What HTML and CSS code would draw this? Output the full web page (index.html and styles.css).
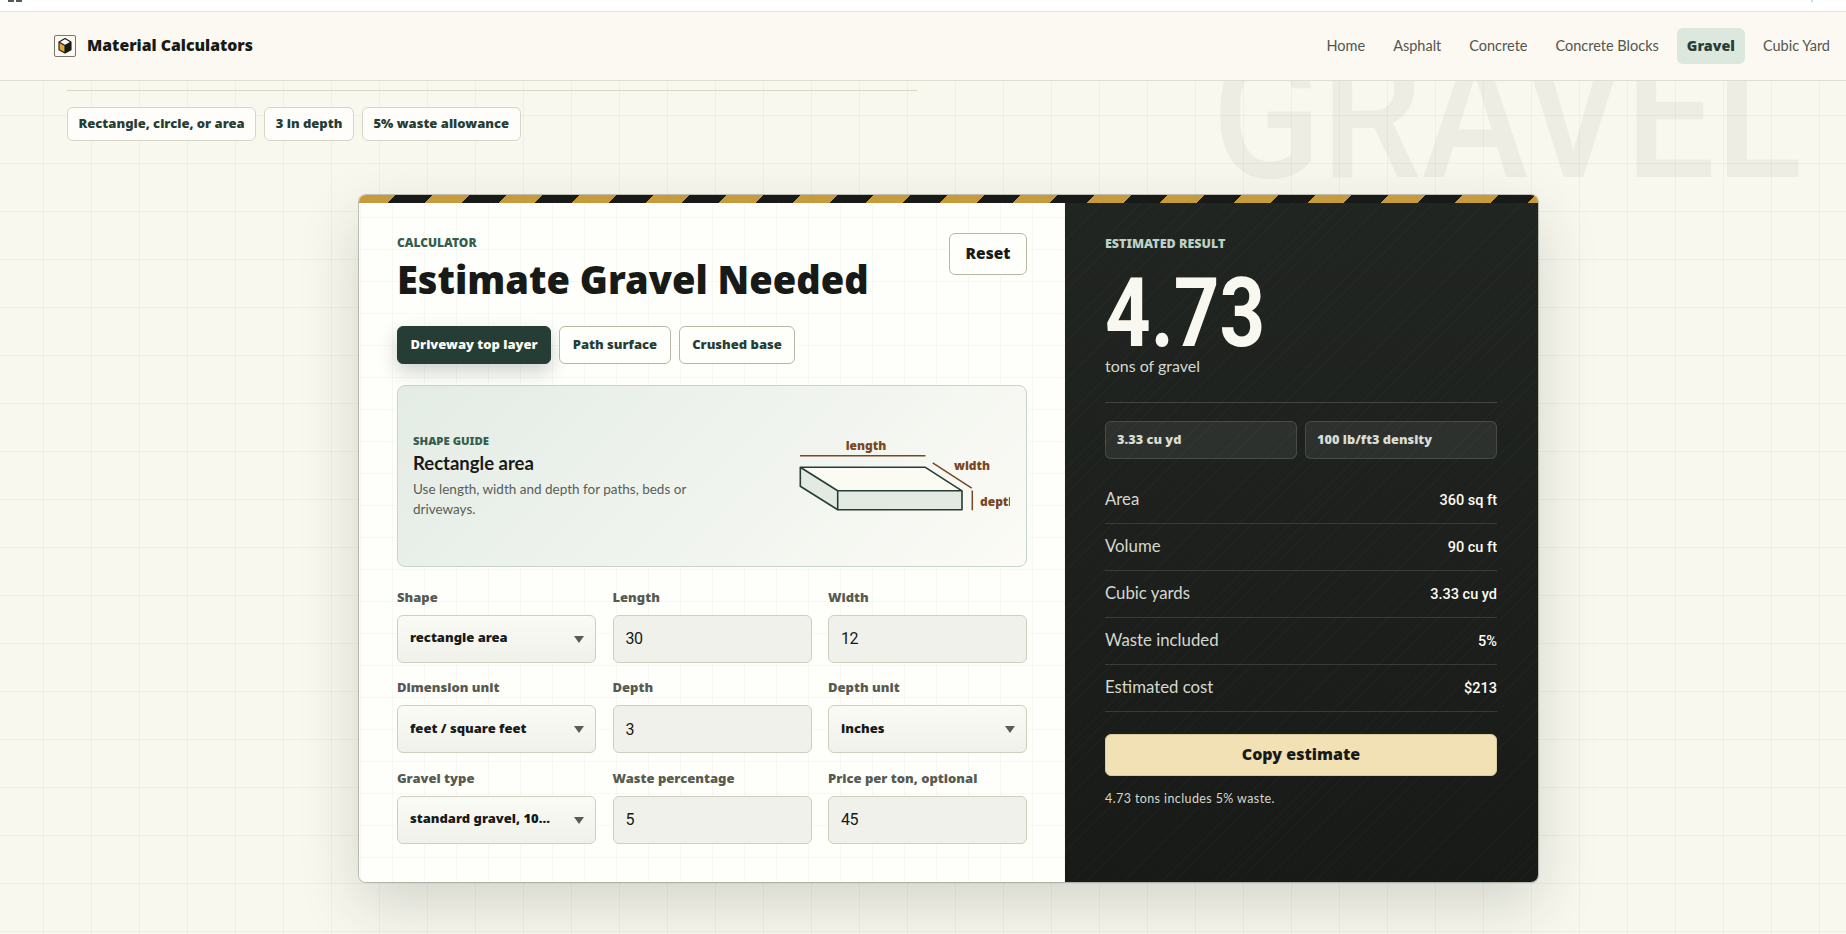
FILE: index.html
```html
<!DOCTYPE html>
<html lang="en">
<head>
<meta charset="utf-8">
<title>Gravel Calculator</title>
<link rel="stylesheet" href="styles.css">
</head>
<body>
<div class="chrome-strip"><span class="chrome-mark"></span><span class="chrome-dot"></span></div>
<header class="site-header">
  <a class="brand" href="#">
    <span class="brand-box">
      <svg width="22" height="22" viewBox="0 0 22 22">
        <path d="M11 3.5 17 7 11 10.5 5 7Z" fill="#fdfcf6"/>
        <path d="M5 7 11 10.5V18L5 14.8Z" fill="#e5a52f"/>
        <path d="M17 7 11 10.5V18L17 14.8Z" fill="#171a17"/>
        <path d="M11 3.5 17 7V14.8L11 18 5 14.8V7ZM5 7 11 10.5 17 7M11 10.5V18" fill="none" stroke="#171a17" stroke-width="1.1" stroke-linejoin="round"/>
      </svg>
    </span>
    <span class="brand-name">Material Calculators</span>
  </a>
  <nav class="site-nav">
    <a href="#">Home</a>
    <a href="#">Asphalt</a>
    <a href="#">Concrete</a>
    <a href="#">Concrete Blocks</a>
    <a href="#" class="is-active">Gravel</a>
    <a href="#">Cubic Yard</a>
  </nav>
</header>
<div class="watermark">GRAVEL</div>
<main class="page">
  <div class="hero">
    <div class="hero-rule"></div>
    <ul class="chips">
      <li>Rectangle, circle, or area</li>
      <li>3 in depth</li>
      <li>5% waste allowance</li>
    </ul>
  </div>
  <section class="card">
    <div class="hazard"></div>
    <div class="card-body">
      <div class="calc">
        <div class="calc-head">
          <div>
            <p class="eyebrow">CALCULATOR</p>
            <h1>Estimate Gravel Needed</h1>
          </div>
          <button class="reset" type="button">Reset</button>
        </div>
        <div class="tabs">
          <button type="button" class="tab is-active">Driveway top layer</button>
          <button type="button" class="tab">Path surface</button>
          <button type="button" class="tab">Crushed base</button>
        </div>
        <div class="guide">
          <div class="guide-copy">
            <p class="guide-kicker">SHAPE GUIDE</p>
            <h2>Rectangle area</h2>
            <p class="guide-text">Use length, width and depth for paths, beds or driveways.</p>
          </div>
          <svg class="guide-art" width="220" height="120" viewBox="0 0 220 120">
            <path d="M10.3 51.2H135L172 74.8H47.7Z" fill="#fbfaf3"/>
            <path d="M10.3 51.2 47.7 74.8V93.8L10.3 70.2Z" fill="#e2eae2"/>
            <path d="M47.7 74.8H172V93.8H47.7Z" fill="#e2eae2"/>
            <path d="M10.3 51.2H135L172 74.8V93.8H47.7L10.3 70.2ZM10.3 51.2 47.7 74.8H172M47.7 74.8V93.8" fill="none" stroke="#263d36" stroke-width="1.6" stroke-linejoin="round"/>
            <path d="M10 39.8H135.5M142.7 46.8 181.7 72.2M182.3 74.5V94.2" fill="none" stroke="#7a4722" stroke-width="1.5"/>
            <text class="art-label" x="76" y="33.5" text-anchor="middle">length</text>
            <text class="art-label" x="164" y="53.5">width</text>
            <text class="art-label" x="190" y="89.5">depth</text>
          </svg>
        </div>
        <form class="fields">
          <label class="field"><span>Shape</span>
            <span class="select-wrap"><select><option>rectangle area</option></select></span></label>
          <label class="field"><span>Length</span><input value="30"></label>
          <label class="field"><span>Width</span><input value="12"></label>
          <label class="field"><span>Dimension unit</span>
            <span class="select-wrap"><select><option>feet / square feet</option></select></span></label>
          <label class="field"><span>Depth</span><input value="3"></label>
          <label class="field"><span>Depth unit</span>
            <span class="select-wrap"><select><option>inches</option></select></span></label>
          <label class="field"><span>Gravel type</span>
            <span class="select-wrap"><select><option>standard gravel, 100 lb/ft3</option></select></span></label>
          <label class="field"><span>Waste percentage</span><input value="5"></label>
          <label class="field"><span>Price per ton, optional</span><input value="45"></label>
        </form>
      </div>
      <aside class="result">
        <p class="result-kicker">ESTIMATED RESULT</p>
        <div class="result-value"><span>4.73</span></div>
        <p class="result-unit">tons of gravel</p>
        <div class="result-chips">
          <span>3.33 cu yd</span>
          <span>100 lb/ft3 density</span>
        </div>
        <dl class="rows">
          <div><dt>Area</dt><dd>360 sq ft</dd></div>
          <div><dt>Volume</dt><dd>90 cu ft</dd></div>
          <div><dt>Cubic yards</dt><dd>3.33 cu yd</dd></div>
          <div><dt>Waste included</dt><dd>5%</dd></div>
          <div><dt>Estimated cost</dt><dd>$213</dd></div>
        </dl>
        <button class="copy" type="button">Copy estimate</button>
        <p class="note">4.73 tons includes 5% waste.</p>
      </aside>
    </div>
  </section>
</main>
</body>
</html>
```

FILE: styles.css
```css
* { box-sizing: border-box; }
html, body { margin: 0; height: 934px; overflow: hidden; }
body {
  position: relative;
  font-family: "Lato", "Liberation Sans", sans-serif;
  color: #171a17;
  background-color: #f8f8ef;
  background-image:
    linear-gradient(to right, rgba(40,50,35,.045) 1px, transparent 1px),
    linear-gradient(to bottom, rgba(40,50,35,.045) 1px, transparent 1px);
  background-size: 48px 48px;
  background-position: 43px 19px;
}
p, h1, h2, ul, dl, dd { margin: 0; padding: 0; }
a { text-decoration: none; color: inherit; }
button, input, select { font-family: inherit; }

.chrome-strip { position: relative; height: 12px; background: #fff; border-bottom: 1px solid #e2e3dd; }
.chrome-mark { position: absolute; left: 8px; top: 0; width: 14px; height: 2px; background: repeating-linear-gradient(to right, #55575a 0 6px, transparent 6px 8px); }
.chrome-dot { position: absolute; left: 1811px; top: 0; width: 2px; height: 2px; background: #c9d6f2; }

.site-header {
  position: relative; z-index: 2;
  height: 69px; padding: 0 6px 0 54px;
  display: flex; align-items: center; justify-content: space-between;
  background: #fbf9f1; border-bottom: 1px solid #dfdfd0;
}
.brand { display: flex; align-items: center; gap: 11px; }
.brand-box { width: 22px; height: 22px; border: 1.5px solid #77776e; border-radius: 2px; display: flex; align-items: center; justify-content: center; background: #fbf9f1; }
.brand-box svg { flex: none; }
.brand-name { font-family: "Noto Sans", sans-serif; font-size: 15.8px; line-height: 20px; font-weight: 900; margin-top: -3px; }
.site-nav { display: flex; gap: 8px; align-items: center; }
.site-nav a { padding: 9px 10px; font-size: 14.5px; line-height: 18px; color: #53564f; border-radius: 6px; }
.site-nav a.is-active { background: #dce7de; color: #263d36; font-family: "Noto Sans", sans-serif; font-size: 14.3px; font-weight: 900; }

.watermark {
  position: absolute; z-index: 0; left: 1212px; top: 30px;
  font-family: "Roboto", sans-serif; font-size: 180px; line-height: 172px; font-weight: 500;
  color: rgba(40,45,30,.05); white-space: nowrap;
  transform: scaleX(.89); transform-origin: left top;
}

.page { position: relative; z-index: 1; padding: 9px 0 0 67px; }
.hero-rule { width: 850px; height: 1px; background: #d9d8c8; }
.chips { list-style: none; display: flex; gap: 8px; margin-top: 16px; }
.chips li {
  height: 34px; padding: 0 10.5px 2px; display: flex; align-items: center;
  font-family: "Noto Sans", sans-serif; font-size: 13px; font-weight: 900; color: #263d36;
  background: #fefdf9; border: 1px solid #d6d5c6; border-radius: 6px;
}

.card {
  width: 1179px; margin: 54px 0 0 292px;
  border-radius: 7px; overflow: hidden;
  box-shadow: 0 0 0 1px rgba(60,60,45,.28), 0 22px 60px rgba(30,35,25,.17);
  background: #fefefa;
}
.hazard { height: 8px; background: repeating-linear-gradient(135deg, #c79a3b 0 26px, #171a17 26px 52px); }
.card-body { display: grid; grid-template-columns: 706px 473px; height: 679px; }

.calc {
  padding: 30px 38px 0;
  background-color: #fefefa;
  background-image:
    linear-gradient(to right, rgba(40,50,35,.03) 1px, transparent 1px),
    linear-gradient(to bottom, rgba(40,50,35,.03) 1px, transparent 1px);
  background-size: 32px 32px;
  background-position: 1px 14px;
}
.calc-head { display: flex; justify-content: space-between; align-items: flex-start; }
.eyebrow { font-family: "Noto Sans", sans-serif; font-size: 12px; line-height: 14px; font-weight: 900; color: #355e4d; margin-top: 3px; }
h1 { font-family: "Noto Sans", sans-serif; font-size: 38px; line-height: 46px; font-weight: 900; margin-top: 6px; white-space: nowrap; }
.reset {
  width: 78px; height: 42px; margin-top: 0; padding: 0 0 2px;
  font-family: "Noto Sans", sans-serif; font-size: 15.5px; font-weight: 900; color: #171a17;
  background: #fefefa; border: 1px solid #b9b6a5; border-radius: 6px;
}
.tabs { display: flex; gap: 8px; margin-top: 24px; }
.tab {
  height: 38px; padding: 0 12.5px 3px;
  font-family: "Noto Sans", sans-serif; font-size: 13px; font-weight: 900; color: #263d36;
  background: #fefefa; border: 1px solid #b9b6a5; border-radius: 6px;
}
.tab.is-active { background: #263d36; border-color: #263d36; color: #fbfbf4; box-shadow: 0 8px 18px rgba(38,61,54,.22); }

.guide {
  height: 182px; margin-top: 21px; padding: 0 16px 0 15px;
  display: flex; align-items: center; justify-content: space-between;
  background: linear-gradient(135deg, #e3ece5 0%, #fcfbf6 100%);
  border: 1px solid #c8d3ca; border-radius: 8px;
}
.guide-copy { width: 300px; }
.guide-kicker { font-family: "Noto Sans", sans-serif; font-size: 11.3px; line-height: 14px; font-weight: 900; color: #355e4d; }
h2 { font-size: 18.5px; line-height: 24px; font-weight: 700; margin-top: 3px; }
.guide-text { font-size: 13.5px; line-height: 20px; color: #5a5d55; margin-top: 4px; }
.guide-art { flex: none; display: block; }
.art-label { font-family: "Noto Sans", sans-serif; font-size: 12px; font-weight: 900; fill: #7a4722; }

.fields { display: grid; grid-template-columns: repeat(3, 199px); column-gap: 16.5px; row-gap: 15.5px; margin-top: 20.5px; }
.field { display: flex; flex-direction: column; gap: 9px; }
.field > span:first-child { font-family: "Noto Sans", sans-serif; font-size: 13px; line-height: 18px; font-weight: 900; color: #575a52; }
.field input {
  width: 100%; height: 48px; padding: 0 12px;
  font-family: "Roboto", sans-serif; font-size: 16px; letter-spacing: -.6px; color: #171a17;
  background: #f1f1eb; border: 1px solid #d1cec0; border-radius: 6px;
}
.select-wrap { position: relative; display: block; }
.select-wrap::after {
  content: ""; position: absolute; right: 12px; top: 21px;
  border-left: 5px solid transparent; border-right: 5px solid transparent; border-top: 7px solid #5a5d55;
  pointer-events: none;
}
.select-wrap select {
  appearance: none; -webkit-appearance: none; width: 100%; height: 48px; padding: 0 40px 3px 12px;
  font-family: "Noto Sans", sans-serif; font-size: 13px; font-weight: 900; color: #171a17;
  text-overflow: ellipsis; white-space: nowrap;
  background: linear-gradient(to bottom, #fbfbf6, #f1f1eb);
  border: 1px solid #d1cec0; border-radius: 6px;
}

.result {
  padding: 33px 41px 0 40px;
  color: #f9f8f0;
  background:
    repeating-linear-gradient(135deg, transparent 0 8px, rgba(255,255,255,.018) 8px 9px),
    linear-gradient(to bottom, #212522, #181a17);
}
.result-kicker { font-family: "Noto Sans", sans-serif; font-size: 12.5px; line-height: 16px; font-weight: 900; color: #bcd0c4; }
.result-value { font-family: "Roboto", sans-serif; font-size: 96px; line-height: 100px; font-weight: 700; margin-top: 11px; height: 100px; }
.result-value span { display: inline-block; transform: scaleX(.83); transform-origin: left center; }
.result-unit { font-size: 16px; line-height: 20px; color: #d5d8ce; margin-top: -7px; }
.result-chips {
  display: grid; grid-template-columns: 1fr 1fr; gap: 8px;
  margin-top: 26px; padding-top: 18px; border-top: 1px solid rgba(255,255,255,.16);
}
.result-chips span {
  height: 38px; padding: 0 11px 2px; display: flex; align-items: center;
  font-family: "Noto Sans", sans-serif; font-size: 12.8px; font-weight: 900; color: #d9dcd2;
  background: rgba(255,255,255,.07); border: 1px solid rgba(255,255,255,.13); border-radius: 6px;
}
.rows { margin-top: 18px; }
.rows div { height: 47px; display: flex; align-items: center; justify-content: space-between; border-bottom: 1px solid rgba(255,255,255,.13); }
.rows dt { font-size: 16.8px; line-height: 20px; padding-bottom: 2px; color: #d5d8ce; }
.rows dd { font-family: "Roboto", sans-serif; font-size: 14.5px; font-weight: 500; color: #fbfaf3; }
.copy {
  display: block; width: 100%; height: 42px; margin-top: 22px; padding: 0 0 2px;
  font-family: "Noto Sans", sans-serif; font-size: 16px; font-weight: 900; color: #171a17;
  background: #f1e1b5; border: 1px solid #d8cba0; border-radius: 6px;
}
.note { font-size: 12.5px; line-height: 18px; letter-spacing: .4px; color: #d5d8ce; margin-top: 14px; }
```
